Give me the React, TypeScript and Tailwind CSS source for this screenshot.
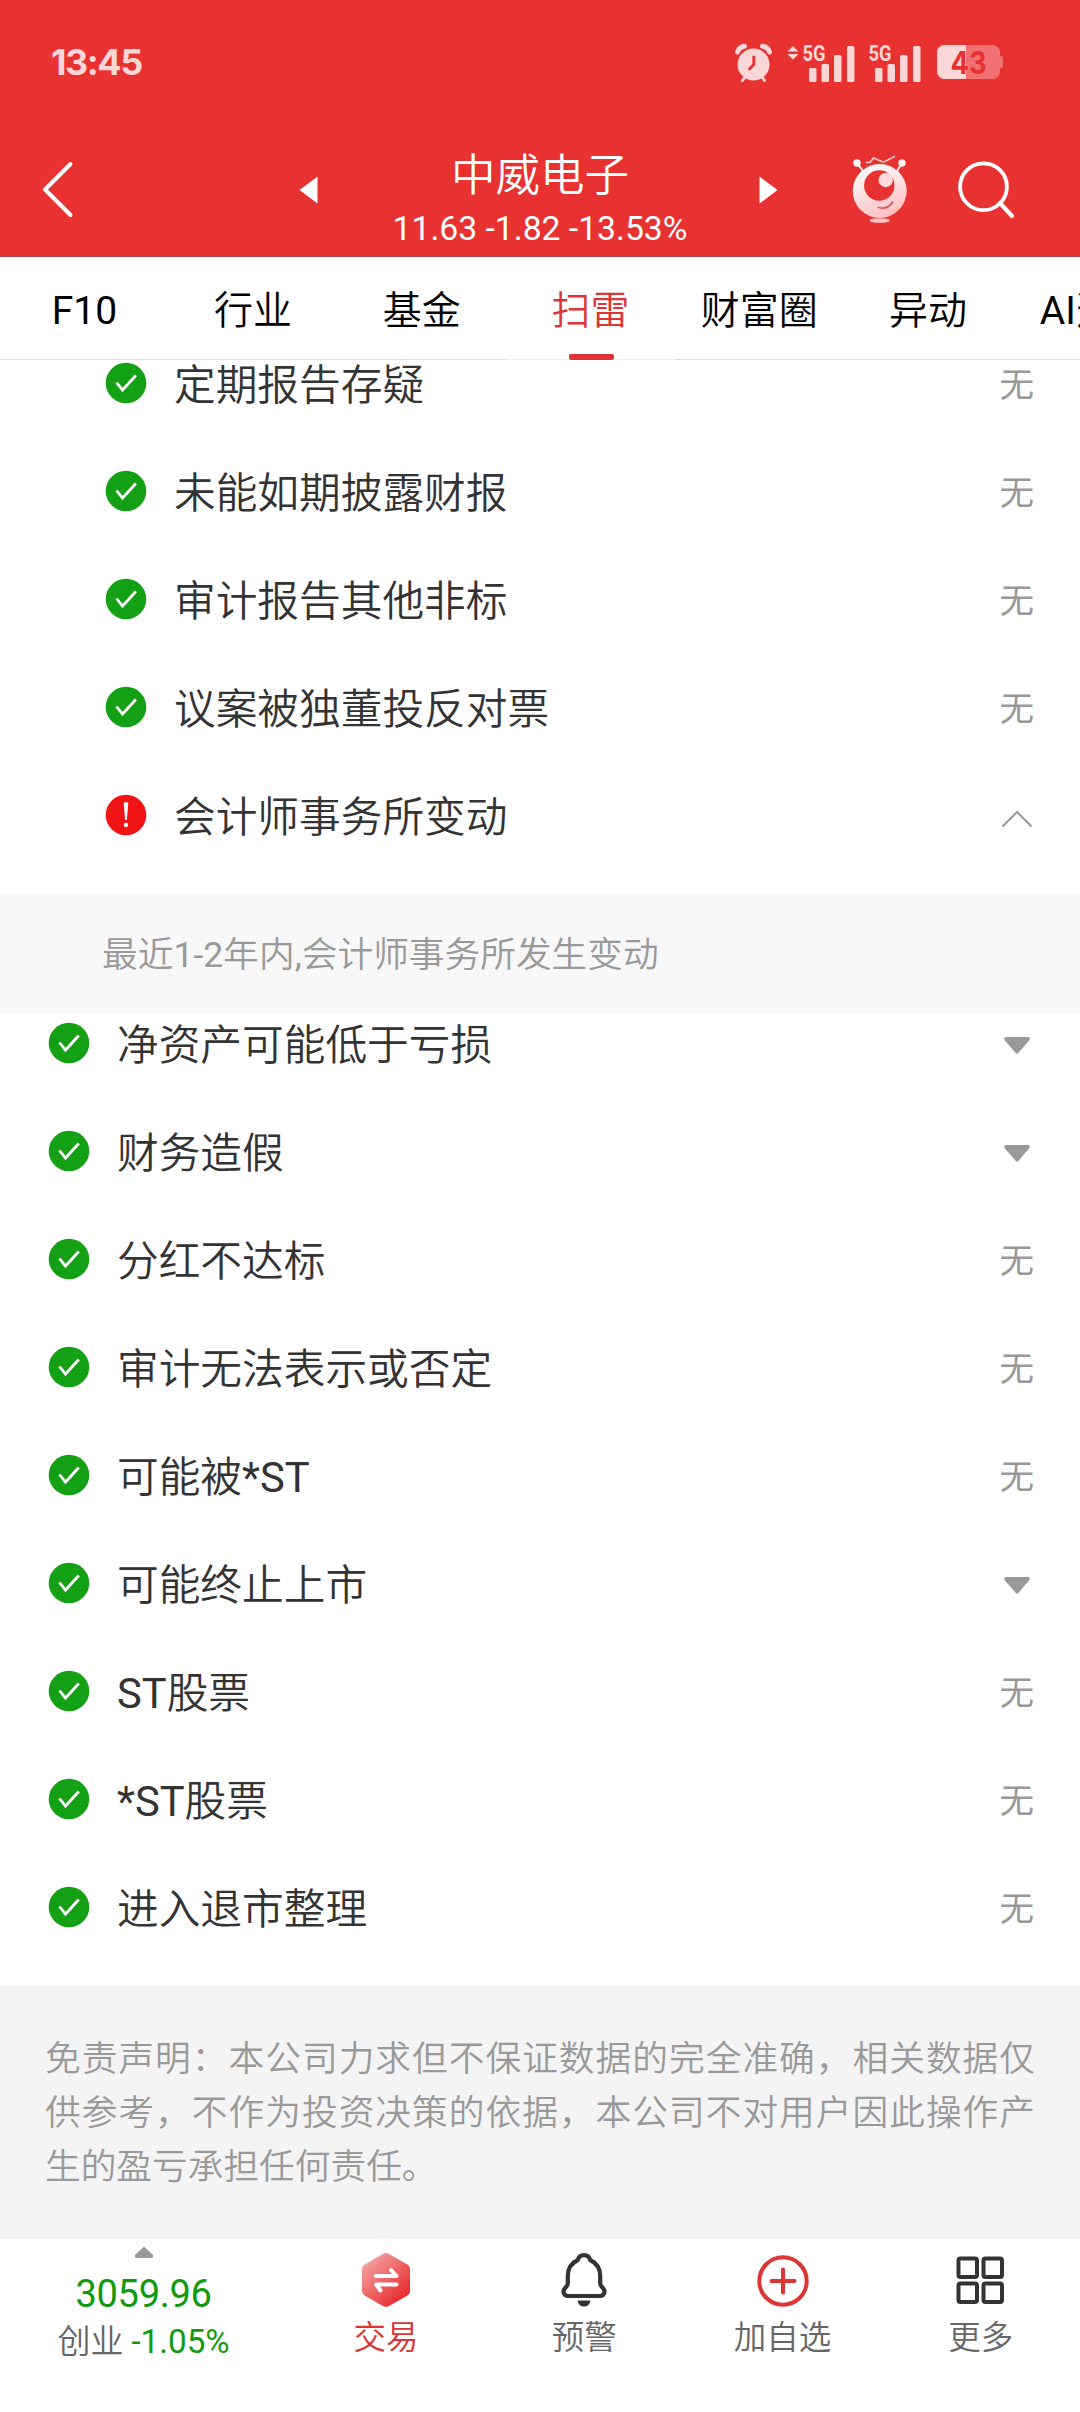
import React from "react";

const cjk = "font-['Roboto','Noto_Sans_CJK_SC',sans-serif]";

/* Latin runs use the regular weight beside the slightly lighter Chinese text. */
function Mixed({ text }: { text: string }) {
  return (
    <>
      {text.split(/([A-Za-z0-9*,-]+)/).map((part, i) =>
        i % 2 ? <span key={i} className="font-normal">{part}</span> : part
      )}
    </>
  );
}

function StatusSignal({ arrows }: { arrows?: boolean }) {
  return (
    <svg width="70" height="40" viewBox="0 0 70 40" fill="#fbd6d7">
      {arrows && <path d="M5 4 L10.5 9.5 H-0.5Z M-0.5 12 H10.5 L5 17.5Z" transform="translate(1 0)" />}
      <text x="15.5" y="19" fontSize="21.5" fontWeight="700" textLength="23" lengthAdjust="spacingAndGlyphs" fontFamily="Roboto">5G</text>
      <rect x="22" y="26" width="7.5" height="14" rx="1.5" />
      <rect x="34.5" y="22" width="7.5" height="18" rx="1.5" />
      <rect x="47" y="13" width="7.5" height="27" rx="1.5" />
      <rect x="60" y="4" width="7.5" height="36" rx="1.5" />
    </svg>
  );
}

function StatusBar() {
  return (
    <div className="flex h-[124px] items-center pl-[51px] pr-[76px] text-[#fbd6d7]">
      <span className="font-['Inter',sans-serif] text-[36px] font-bold leading-none tracking-[-1.5px]">13:45</span>
      <div className="ml-auto flex items-center">
        <svg className="mr-[14px]" width="38" height="40" viewBox="0 0 38 40">
          <g fill="none" stroke="#fbd6d7" strokeLinecap="round">
            <path d="M2.5 10 Q4 5 9.5 4.2" strokeWidth="5" />
            <path d="M34.5 10 Q33 5 27.5 4.2" strokeWidth="5" />
          </g>
          <circle cx="18.5" cy="22.5" r="17.5" fill="#e83131" />
          <circle cx="18.5" cy="22.5" r="16" fill="#fbd6d7" />
          <path d="M10 35 L7.5 38.5 M27 35 L29.5 38.5" stroke="#fbd6d7" strokeWidth="3" strokeLinecap="round" />
          <path d="M18.8 15 V22.5 L14.5 27" fill="none" stroke="#e83131" strokeWidth="2.8" strokeLinecap="round" strokeLinejoin="round" />
        </svg>
        <StatusSignal arrows />
        <div className="-ml-1 mr-[14px]"><StatusSignal /></div>
        <svg width="67" height="36" viewBox="0 0 67 36">
          <rect x="0" y="1" width="63" height="34" rx="7.5" fill="#f17172" />
          <path d="M7.5 1 H29 V35 H7.5 A7.5 7.5 0 0 1 0 27.5 V8.5 A7.5 7.5 0 0 1 7.5 1Z" fill="#fbd6d7" />
          <path d="M63 12 H64 Q66 12 66 14 V22 Q66 24 64 24 H63Z" fill="#f17172" />
          <text x="13.5" y="29.5" fontSize="31" fontWeight="700" fill="#e83131" fontFamily="Inter" textLength="36" lengthAdjust="spacingAndGlyphs">43</text>
        </svg>
      </div>
    </div>
  );
}

function Header() {
  return (
    <header className="h-[257px] border-b border-[#b5484a] bg-[#e83131]">
      <StatusBar />
      <div className="flex h-[132px] items-center text-white">
        <svg className="ml-[41px]" width="34" height="60" viewBox="0 0 34 60">
          <path d="M29.5 4 L4 29.5 L29.5 55" fill="none" stroke="#fff" strokeWidth="4" strokeLinecap="round" strokeLinejoin="round" />
        </svg>
        <svg className="ml-[224px]" width="19" height="28" viewBox="0 0 19 28"><path d="M18.5 0.5 V27.5 L0.5 14Z" fill="#fff" /></svg>
        <div className="flex w-[441px] flex-col items-center pt-[15px] pl-[3px]">
          <h1 className="text-[44.5px] font-[350] leading-[62px]">中威电子</h1>
          <p className="text-[33.7px] leading-[44px]">11.63 -1.82 -13.53%</p>
        </div>
        <svg width="19" height="28" viewBox="0 0 19 28"><path d="M0.5 0.5 V27.5 L18.5 14Z" fill="#fff" /></svg>
        <svg className="ml-[62px]" width="80" height="80" viewBox="0 0 80 80">
          <defs>
            <linearGradient id="robot" x1="0.2" y1="0" x2="0.6" y2="1">
              <stop offset="0" stopColor="#fff" />
              <stop offset="1" stopColor="#fcbfc1" />
            </linearGradient>
          </defs>
          <path d="M17 13 L23 21 M62 13 L57 21" stroke="#fff" strokeWidth="1.8" />
          <circle cx="17" cy="13" r="3.7" fill="#fff" />
          <circle cx="62" cy="13" r="3.7" fill="#fff0f0" />
          <path d="M25.7 12.5 H30 L33.5 8 L43.5 12.2 L55 6.3" fill="none" stroke="#fcd0d0" strokeWidth="1.6" />
          <circle cx="39.7" cy="41" r="27" fill="url(#robot)" />
          <circle cx="39.3" cy="35.5" r="15.2" fill="#e83131" />
          <circle cx="45.7" cy="30" r="7.2" fill="#fddcdc" />
          <path d="M38.5 57.5 Q48 60 52.5 52" fill="none" stroke="#d9575a" strokeWidth="1.8" strokeLinecap="round" />
          <ellipse cx="39.7" cy="70.5" rx="10.2" ry="2.3" fill="#fcc8c9" />
        </svg>
        <svg className="ml-[36px]" width="60" height="62" viewBox="0 0 60 62">
          <circle cx="27.5" cy="27.7" r="23.4" fill="none" stroke="#fff" strokeWidth="3.8" />
          <path d="M44 44 L56 57" stroke="#fff" strokeWidth="4.2" strokeLinecap="round" />
        </svg>
      </div>
    </header>
  );
}

const tabs = ["F10", "行业", "基金", "扫雷", "财富圈", "异动", "AI选股"];

function Tabs() {
  return (
    <nav className="flex h-[103px] overflow-hidden bg-white">
      {tabs.map((t) => {
        const on = t === "扫雷";
        return (
          <div
            key={t}
            className={
              "relative flex w-[168.75px] shrink-0 items-center justify-center border-b text-[39px] font-[350] leading-none " +
              (on ? "border-[#f0f0f0] text-[#dc3535]" : "border-[#dcdcdc] text-black")
            }
          >
            <span className="mt-[7px] whitespace-nowrap"><Mixed text={t} /></span>
            {on && <i className="absolute -bottom-px left-[63px] h-[6px] w-[45px] rounded-[2px] bg-[#e23236]" />}
          </div>
        );
      })}
    </nav>
  );
}

type Mark = "none" | "down" | "up";

function Row({ label, mark, nested, alert }: { label: string; mark: Mark; nested?: boolean; alert?: boolean }) {
  return (
    <li className={"flex h-[108px] items-center pr-[46px] " + (nested ? "pl-[105px]" : "pl-[48px]")}>
      <svg className="mr-[27px] shrink-0" width="42" height="42" viewBox="0 0 42 42">
        <circle cx="21" cy="21" r="20.3" fill={alert ? "#f01414" : "#14a014"} />
        {alert ? (
          <g fill="#fff">
            <path d="M18.8 9.3 Q18.8 8.3 19.8 8.3 H22.2 Q23.2 8.3 23.2 9.3 L21.9 26 H20.1Z" />
            <circle cx="21" cy="31" r="2.2" />
          </g>
        ) : (
          <path d="M11.5 20.5 L17.5 28 L30.8 13.5" fill="none" stroke="#fff" strokeWidth="2.8" />
        )}
      </svg>
      <span className="mt-[5px] text-[41.7px] font-[350] leading-none text-[#333]"><Mixed text={label} /></span>
      <span className="ml-auto mt-[4px] text-[34.6px] leading-none text-[#999]">
        {mark === "none" && "无"}
        {mark === "down" && (
          <svg className="mr-[4px]" width="26" height="17" viewBox="0 0 26 17">
            <path d="M2 0 H24 Q26.5 0 25.5 3 L14.5 15.8 Q13 17.5 11.5 15.8 L0.5 3 Q-0.5 0 2 0Z" fill="#999" />
          </svg>
        )}
        {mark === "up" && (
          <svg className="mr-px mt-[3px]" width="32" height="18" viewBox="0 0 32 18">
            <path d="M1.5 16.5 L16 2 L30.5 16.5" fill="none" stroke="#999" strokeWidth="2" />
          </svg>
        )}
      </span>
    </li>
  );
}

const nestedRows: [string, Mark][] = [
  ["定期报告存疑", "none"],
  ["未能如期披露财报", "none"],
  ["审计报告其他非标", "none"],
  ["议案被独董投反对票", "none"],
  ["会计师事务所变动", "up"],
];

const rows: [string, Mark][] = [
  ["净资产可能低于亏损", "down"],
  ["财务造假", "down"],
  ["分红不达标", "none"],
  ["审计无法表示或否定", "none"],
  ["可能被*ST", "none"],
  ["可能终止上市", "down"],
  ["ST股票", "none"],
  ["*ST股票", "none"],
  ["进入退市整理", "none"],
];

function TradeIcon() {
  return (
    <svg width="56" height="56" viewBox="0 0 56 56">
      <defs>
        <linearGradient id="hex" x1="0.1" y1="0.1" x2="0.8" y2="0.9">
          <stop offset="0" stopColor="#f6a5a5" />
          <stop offset="1" stopColor="#e62a2d" />
        </linearGradient>
      </defs>
      <path d="M24.5 2.2 Q28 0 31.5 2.2 L49 12.2 Q52 14 52 17.5 V38.5 Q52 42 49 43.8 L31.5 53.8 Q28 56 24.5 53.8 L7 43.8 Q4 42 4 38.5 V17.5 Q4 14 7 12.2Z" fill="url(#hex)" />
      <path d="M18 24 H38.5 L33 18 M38.5 32.5 H18 L22.5 38.5" fill="none" stroke="#fff" strokeWidth="4" strokeLinecap="round" strokeLinejoin="round" />
    </svg>
  );
}

function BellIcon() {
  return (
    <svg width="56" height="56" viewBox="0 0 56 56">
      <path d="M28 3.2 C31.5 3.2 33.3 5 34.2 8 C40.5 11 44.2 17 44.2 24 V31.5 C44.2 35 48.5 35.5 48.5 39.5 C48.5 42.5 46.5 44 44 44 H12 C9.5 44 7.5 42.5 7.5 39.5 C7.5 35.5 11.8 35 11.8 31.5 V24 C11.8 17 15.5 11 21.8 8 C22.7 5 24.5 3.2 28 3.2Z" fill="none" stroke="#333" strokeWidth="4.2" strokeLinejoin="round" />
      <path d="M21.5 48.5 H34.5 Q33.5 54.5 28 54.5 Q22.5 54.5 21.5 48.5Z" fill="#333" />
    </svg>
  );
}

function AddIcon() {
  return (
    <svg width="56" height="56" viewBox="0 0 56 56" fill="none" stroke="#dc3535" strokeWidth="4">
      <circle cx="28" cy="29" r="23.7" />
      <path d="M28 17.5 V40.5 M16.5 29 H39.5" strokeLinecap="round" />
    </svg>
  );
}

function MoreIcon() {
  return (
    <svg width="56" height="56" viewBox="0 0 56 56" fill="none" stroke="#333" strokeWidth="4">
      <rect x="5.5" y="6.5" width="18.5" height="18.5" rx="2" />
      <rect x="30.5" y="6.5" width="18.5" height="18.5" rx="2" />
      <rect x="5.5" y="31.5" width="18.5" height="18.5" rx="2" />
      <rect x="30.5" y="31.5" width="18.5" height="18.5" rx="2" />
    </svg>
  );
}

const actions = [
  { label: "交易", icon: <TradeIcon />, tone: "text-[#d93535]" },
  { label: "预警", icon: <BellIcon />, tone: "text-[#666]" },
  { label: "加自选", icon: <AddIcon />, tone: "text-[#666]" },
  { label: "更多", icon: <MoreIcon />, tone: "text-[#666]" },
];

function BottomBar() {
  return (
    <footer className="flex h-[173px] bg-white">
      <div className="flex w-[287px] shrink-0 flex-col items-center pt-[7px]">
        <svg width="20" height="13" viewBox="0 0 20 13"><path d="M10 0.5 L19 9 Q20 12 17 12 H3 Q0 12 1 9Z" fill="#999" /></svg>
        <div className="mt-[13px] text-[38px] leading-[44px] tracking-[-0.3px] text-[#0f9a0f]">3059.96</div>
        <div className="mt-[3px] flex items-center gap-[8px] text-[33px] leading-[46px]">
          <span className="font-[350] text-[#666]">创业</span>
          <span className="text-[33.2px] text-[#0f9a0f]">-1.05%</span>
        </div>
      </div>
      {actions.map((a) => (
        <div key={a.label} className="flex w-[198.25px] shrink-0 flex-col items-center pt-[13px]">
          {a.icon}
          <span className={"mt-[6px] text-[32.5px] font-[350] leading-[48px] " + a.tone}>{a.label}</span>
        </div>
      ))}
    </footer>
  );
}

export default function App() {
  return (
    <div lang="zh-CN" className={"flex h-[2412px] w-[1080px] flex-col overflow-hidden bg-white " + cjk}>
      <Header />
      <Tabs />
      <main className="flex-1 overflow-hidden">
        <ul className="-mt-[31px]">
          {nestedRows.map(([l, m]) => (
            <Row key={l} label={l} mark={m} nested alert={m === "up"} />
          ))}
        </ul>
        <div className="mt-[25px] flex h-[120px] items-center bg-[#f8f8f8] pt-[3px] pl-[102px] text-[35.7px] font-[350] text-[#999]">
          <span><Mixed text="最近1-2年内,会计师事务所发生变动" /></span>
        </div>
        <ul className="-mt-[25px]">
          {rows.map(([l, m]) => (
            <Row key={l} label={l} mark={m} />
          ))}
        </ul>
        <p className="mt-[25px] h-[253px] bg-[#f4f4f4] px-[45px] pt-[46px] text-justify text-[35.7px] font-[350] leading-[54px] text-[#999]">
          免责声明：本公司力求但不保证数据的完全准确，相关数据仅供参考，不作为投资决策的依据，本公司不对用户因此操作产生的盈亏承担任何责任。
        </p>
      </main>
      <BottomBar />
    </div>
  );
}
